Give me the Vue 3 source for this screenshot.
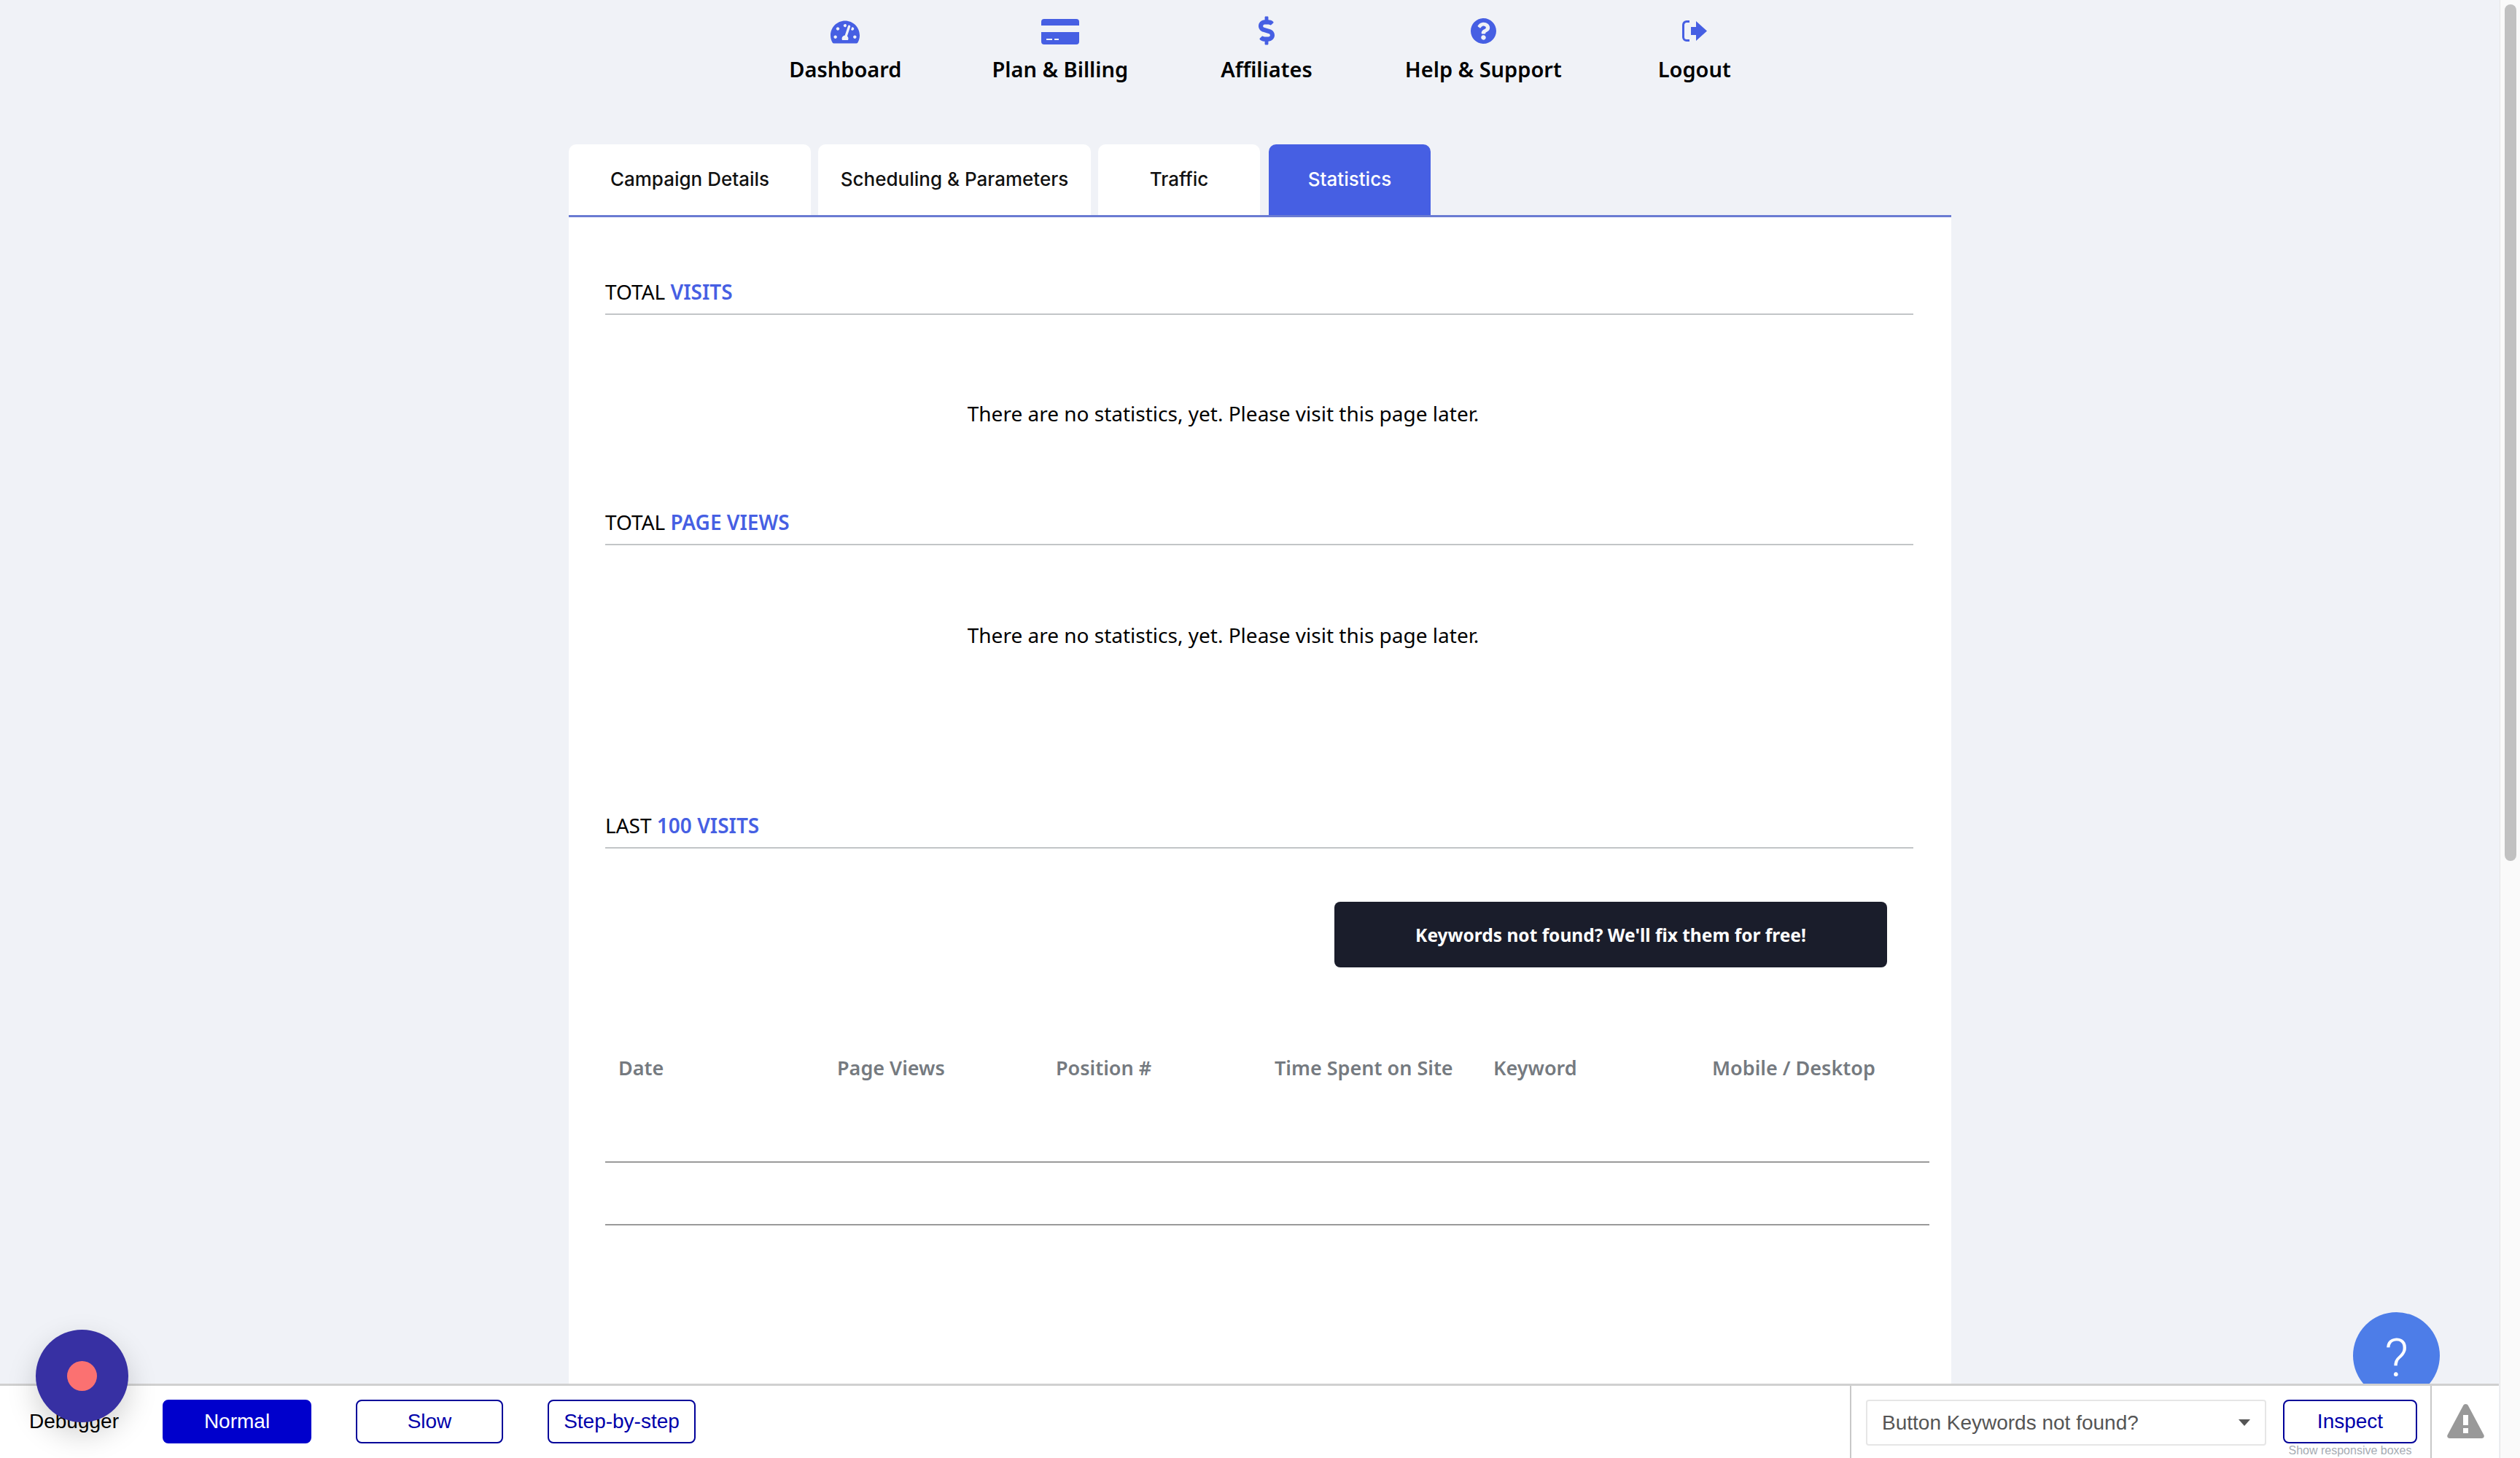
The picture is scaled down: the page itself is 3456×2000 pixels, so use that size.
<script setup>
const columns = ['Date', 'Page Views', 'Position #', 'Time Spent on Site', 'Keyword', 'Mobile / Desktop']
</script>

<template>
  <div class="page">
    <!-- Main navigation -->
    <nav class="nav">
      <a class="nav-item">
        <span class="nav-icon">
          <svg class="ic-dash" viewBox="0 32 576 448"><path d="M288 32C128.94 32 0 160.94 0 320c0 52.8 14.25 102.26 39.06 144.8 5.61 9.62 16.3 15.2 27.44 15.2h443c11.14 0 21.83-5.58 27.44-15.2C561.75 422.26 576 372.8 576 320c0-159.06-128.94-288-288-288zm0 64c14.71 0 26.58 10.13 30.32 23.65-1.11 2.26-2.64 4.23-3.45 6.67l-9.22 27.67c-5.13 3.49-10.97 6.01-17.64 6.01-17.67 0-32-14.33-32-32S270.33 96 288 96zM96 384c-17.67 0-32-14.33-32-32s14.33-32 32-32 32 14.33 32 32-14.33 32-32 32zm48-160c-17.67 0-32-14.33-32-32s14.33-32 32-32 32 14.33 32 32-14.33 32-32 32zm246.77-72.41l-61.33 184C343.13 347.33 352 364.54 352 384c0 11.72-3.38 22.55-8.88 32H232.88c-5.5-9.45-8.88-20.28-8.88-32 0-33.94 26.5-61.43 59.9-63.59l61.34-184.01c4.17-12.56 17.73-19.45 30.36-15.17 12.57 4.19 19.35 17.77 15.17 30.36zm14.66 57.2l15.52-46.55c3.47-1.29 7.13-2.23 11.05-2.23 17.67 0 32 14.33 32 32s-14.33 32-32 32c-11.38-.01-20.89-6.28-26.57-15.22zM480 384c-17.67 0-32-14.33-32-32s14.33-32 32-32 32 14.33 32 32-14.33 32-32 32z" /></svg>
        </span>
        Dashboard
      </a>
      <a class="nav-item">
        <span class="nav-icon">
          <svg class="ic-card" viewBox="0 0 52 35">
            <path d="M4 0h44a4 4 0 0 1 4 4v5H0V4a4 4 0 0 1 4-4z" />
            <path fill-rule="evenodd" d="M0 18h52v13a4 4 0 0 1-4 4H4a4 4 0 0 1-4-4zM7 27v2h8v-2zM18 27v2h6v-2z" />
          </svg>
        </span>
        Plan &amp; Billing
      </a>
      <a class="nav-item">
        <span class="nav-icon">
          <svg class="ic-dollar" viewBox="0 0 288 512"><path d="M209.2 233.4l-108-31.6C88.7 198.2 80 186.5 80 173.5c0-16.3 13.2-29.5 29.5-29.5h66.3c12.2 0 24.2 3.7 34.2 10.5 6.1 4.1 14.3 3.1 19.5-2l34.8-34c7.1-6.9 6.1-18.4-1.8-24.5C238 74.8 207.4 64.1 176 64V16c0-8.8-7.2-16-16-16h-32c-8.8 0-16 7.2-16 16v48h-2.5C45.8 64-5.4 118.7.5 183.6c4.2 46.1 39.4 83.6 83.8 96.6l102.5 30c12.5 3.7 21.2 15.3 21.2 28.3 0 16.3-13.2 29.5-29.5 29.5h-66.3C100 368 88 364.3 78 357.5c-6.1-4.1-14.3-3.1-19.5 2l-34.8 34c-7.1 6.9-6.1 18.4 1.8 24.5 24.5 19.2 55.1 29.9 86.5 30v48c0 8.8 7.2 16 16 16h32c8.8 0 16-7.2 16-16v-48.2c46.6-.9 90.3-28.6 105.7-72.7 21.5-61.6-14.6-124.8-72.5-141.7z" /></svg>
        </span>
        Affiliates
      </a>
      <a class="nav-item">
        <span class="nav-icon">
          <svg class="ic-help" viewBox="8 8 496 496"><path d="M504 256c0 136.997-111.043 248-248 248S8 392.997 8 256C8 119.083 119.043 8 256 8s248 111.083 248 248zM262.655 90c-54.497 0-89.255 22.957-116.549 63.758-3.536 5.286-2.353 12.415 2.715 16.258l34.699 26.31c5.205 3.947 12.621 3.008 16.665-2.122 17.864-22.658 30.113-35.797 57.303-35.797 20.429 0 45.698 13.148 45.698 32.958 0 14.976-12.363 22.667-32.534 33.976C247.128 238.528 216 254.941 216 296v4c0 6.627 5.373 12 12 12h56c6.627 0 12-5.373 12-12v-1.333c0-28.462 83.186-29.647 83.186-106.667 0-58.002-60.165-102-116.531-102zM256 338c-25.365 0-46 20.635-46 46 0 25.364 20.635 46 46 46s46-20.636 46-46c0-25.365-20.635-46-46-46z" /></svg>
        </span>
        Help &amp; Support
      </a>
      <a class="nav-item">
        <span class="nav-icon">
          <svg class="ic-logout" viewBox="0 0 34 29">
            <path class="bracket" d="M10 1.500H6A4.500 4.500 0 0 0 1.500 6v17A4.500 4.500 0 0 0 6 27.500h4" />
            <path d="M19 1l15 13.500L19 28v-8h-7V9h7z" />
          </svg>
        </span>
        Logout
      </a>
    </nav>

    <main class="content">
      <!-- Tabs -->
      <div class="tabs">
        <button class="tab tab-details">Campaign Details</button>
        <button class="tab tab-schedule">Scheduling &amp; Parameters</button>
        <button class="tab tab-traffic">Traffic</button>
        <button class="tab tab-stats active">Statistics</button>
      </div>

      <div class="card">
        <h3 class="title first">TOTAL <span>VISITS</span></h3>
        <p class="empty empty-visits">There are no statistics, yet. Please visit this page later.</p>

        <h3 class="title second">TOTAL <span>PAGE VIEWS</span></h3>
        <p class="empty empty-views">There are no statistics, yet. Please visit this page later.</p>

        <h3 class="title third">LAST <span>100 VISITS</span></h3>

        <div class="cta-row">
          <button class="cta">Keywords not found? We'll fix them for free!</button>
        </div>

        <!-- Empty table -->
        <div class="table">
          <div class="table-head">
            <div v-for="col in columns" :key="col" class="cell">{{ col }}</div>
          </div>
          <div class="table-row"></div>
        </div>
      </div>
    </main>

    <!-- Floating help button, partly behind the debugger bar -->
    <div class="help-btn">?</div>

    <!-- Debugger bar -->
    <footer class="debugger">
      <div class="speed">
        <span class="debugger-label">Debugger</span>
        <button class="dbg-btn filled btn-normal">Normal</button>
        <button class="dbg-btn btn-slow">Slow</button>
        <button class="dbg-btn btn-step">Step-by-step</button>
      </div>
      <div class="inspect">
        <div class="fake-select">
          <span>Button Keywords not found?</span>
          <i class="caret"></i>
        </div>
        <div class="inspect-col">
          <button class="dbg-btn btn-inspect">Inspect</button>
          <small>Show responsive boxes</small>
        </div>
      </div>
      <div class="warn">
        <svg viewBox="0 0 51 47">
          <path fill-rule="evenodd" d="M25.500 0c1.600 0 2.800.9 3.500 2.200l21.300 40c1.400 2.400-.4 4.800-3 4.800H3.700c-2.600 0-4.400-2.400-3-4.800L22 2.200C22.700.9 23.900 0 25.500 0zM22 15v14h7V15zM22 33v7h7v-7z" />
        </svg>
      </div>
    </footer>

    <div class="record"><span></span></div>

    <!-- Page scrollbar -->
    <div class="scrollbar"><div class="thumb"></div></div>
  </div>
</template>

<style>
html,
body {
  margin: 0;
  background: #f0f2f7;
}
</style>

<style scoped>
.page {
  position: relative;
  height: 2000px;
  overflow: hidden;
  background: #f0f2f7;
  font-family: "Noto Sans", sans-serif;
  color: #000;
}

/* Nav */
.nav {
  display: flex;
  justify-content: center;
  gap: 127px;
  height: 198px;
  padding-top: 22px;
  box-sizing: border-box;
}
.nav-item {
  display: flex;
  flex-direction: column;
  align-items: center;
  font-size: 29px;
  font-weight: 600;
  line-height: 40px;
  white-space: nowrap;
}
.nav-item:nth-child(2) { margin-left: -3px; }
.nav-item:last-child { margin-left: 5px; }
.nav-icon {
  display: flex;
  align-items: center;
  justify-content: center;
  height: 40px;
  margin-bottom: 13px;
}
.nav-icon svg {
  display: block;
  fill: #465fe3;
}
.nav-icon .bracket {
  fill: none;
  stroke: #465fe3;
  stroke-width: 3;
}
.ic-dash { width: 40px; height: 32px; margin-top: 4px; }
.ic-card { width: 52px; height: 35px; margin-top: 2px; }
.ic-dollar { width: 22px; height: 40px; }
.ic-help { width: 35px; height: 35px; margin-top: 1px; }
.ic-logout { width: 34px; height: 29px; margin-top: 1px; }

/* Tabs */
.content {
  width: 1896px;
  margin: 0 auto;
}
.tabs {
  display: flex;
  height: 97px;
  border-bottom: 3px solid #6a7bd2;
}
.tab {
  height: 97px;
  padding: 0 0 3px;
  margin-right: 10px;
  border: 0;
  border-radius: 10px 10px 0 0;
  background: #fff;
  color: #111;
  font-family: Inter, sans-serif;
  font-size: 26px;
  font-weight: 500;
}
.tab-details { width: 332px; }
.tab-schedule { width: 374px; }
.tab-traffic { width: 222px; margin-right: 12px; }
.tab-stats { width: 222px; }
.tab.active {
  background: #465fe3;
  color: #fff;
}

/* Card */
.card {
  background: #fff;
  height: 1700px;
  padding: 82px 30px 0 50px;
  box-sizing: border-box;
}
.title {
  margin: 0 22px 0 0;
  font-size: 28px;
  font-weight: 400;
  line-height: 40px;
  padding-bottom: 10px;
  border-bottom: 2px solid #c2c5c7;
}
.title span {
  color: #465fe3;
  font-weight: 600;
}
.second { margin-top: 109px; }
.third { margin-top: 221px; }
.empty {
  margin: 115px 0 0;
  padding-right: 121px;
  text-align: center;
  font-size: 28px;
  line-height: 40px;
}
.empty-views { margin-top: 103px; }

.cta-row {
  display: flex;
  justify-content: flex-end;
  margin: 73px 58px 0 0;
}
.cta {
  width: 758px;
  height: 90px;
  border: 0;
  border-radius: 8px;
  background: #1a1d2b;
  color: #fff;
  font-family: "Noto Sans", sans-serif;
  font-size: 24.5px;
  font-weight: 700;
}

/* Table */
.table-head {
  display: grid;
  grid-template-columns: repeat(6, 300px);
  margin-top: 118px;
  height: 148px;
  border-bottom: 2px solid #9a9a9a;
}
.cell {
  padding-left: 18px;
  color: #757a80;
  font-size: 27px;
  font-weight: 600;
  line-height: 40px;
  white-space: nowrap;
}
.table-row {
  height: 84px;
  border-bottom: 2px solid #9a9a9a;
}

/* Help button */
.help-btn {
  position: absolute;
  left: 3227px;
  top: 1800px;
  width: 119px;
  height: 119px;
  border-radius: 50%;
  background: #4d7de8;
  color: #fff;
  font-family: Roboto, sans-serif;
  font-weight: 300;
  font-size: 72px;
  line-height: 127px;
  text-align: center;
}

/* Debugger bar */
.debugger {
  position: absolute;
  left: 0;
  right: 29px;
  bottom: 0;
  height: 102px;
  display: flex;
  box-sizing: border-box;
  background: #fff;
  border-top: 3px solid #d0d0d0;
  font-family: "Liberation Sans", sans-serif;
  font-size: 28px;
}
.speed {
  flex: 1;
  display: flex;
  align-items: flex-start;
  padding-top: 19px;
}
.debugger-label {
  width: 223px;
  padding-left: 40px;
  box-sizing: border-box;
  line-height: 60px;
  color: #000;
}
.dbg-btn {
  height: 60px;
  padding: 0;
  box-sizing: border-box;
  border: 2px solid #000099;
  border-radius: 8px;
  background: #fff;
  color: #0000aa;
  font-family: "Liberation Sans", sans-serif;
  font-size: 28px;
}
.dbg-btn.filled {
  background: #0000cc;
  border-color: #0000cc;
  color: #fff;
}
.btn-normal { width: 204px; margin-right: 61px; }
.btn-slow { width: 202px; margin-right: 61px; }
.btn-step { width: 203px; }

.inspect {
  display: flex;
  align-items: flex-start;
  gap: 23px;
  width: 798px;
  box-sizing: border-box;
  padding: 19px 0 0 20px;
  border-left: 2px solid #c8c8c8;
  border-right: 2px solid #c8c8c8;
}
.fake-select {
  display: flex;
  align-items: center;
  justify-content: space-between;
  width: 549px;
  height: 63px;
  box-sizing: border-box;
  padding: 0 20px;
  border: 2px solid #e6e6e6;
  border-radius: 4px;
  color: #555;
}
.caret {
  width: 0;
  height: 0;
  border-left: 8px solid transparent;
  border-right: 8px solid transparent;
  border-top: 9px solid #555;
}
.inspect-col {
  display: flex;
  flex-direction: column;
  align-items: center;
  width: 184px;
}
.btn-inspect { width: 184px; }
.inspect-col small {
  margin-top: 1px;
  color: #a6acb3;
  font-size: 16px;
  line-height: 18px;
  white-space: nowrap;
}
.warn {
  width: 92px;
  padding-top: 25px;
  box-sizing: border-box;
  text-align: center;
}
.warn svg {
  width: 51px;
  height: 47px;
  fill: #999;
}

/* Record button */
.record {
  position: absolute;
  left: 49px;
  top: 1824px;
  width: 127px;
  height: 127px;
  display: flex;
  align-items: center;
  justify-content: center;
  border-radius: 50%;
  background: #3730a3;
  box-shadow: 0 16px 40px rgba(0, 0, 0, 0.18);
}
.record span {
  width: 41px;
  height: 41px;
  border-radius: 50%;
  background: #fb7171;
}

/* Scrollbar */
.scrollbar {
  position: absolute;
  top: 0;
  right: 0;
  width: 28px;
  height: 2000px;
  padding-left: 6px;
  box-sizing: border-box;
  background: #fafafa;
  border-left: 1px solid #e6e6e6;
}
.thumb {
  width: 16px;
  height: 1175px;
  margin-top: 6px;
  border-radius: 8px;
  background: #c1c1c1;
}
</style>
